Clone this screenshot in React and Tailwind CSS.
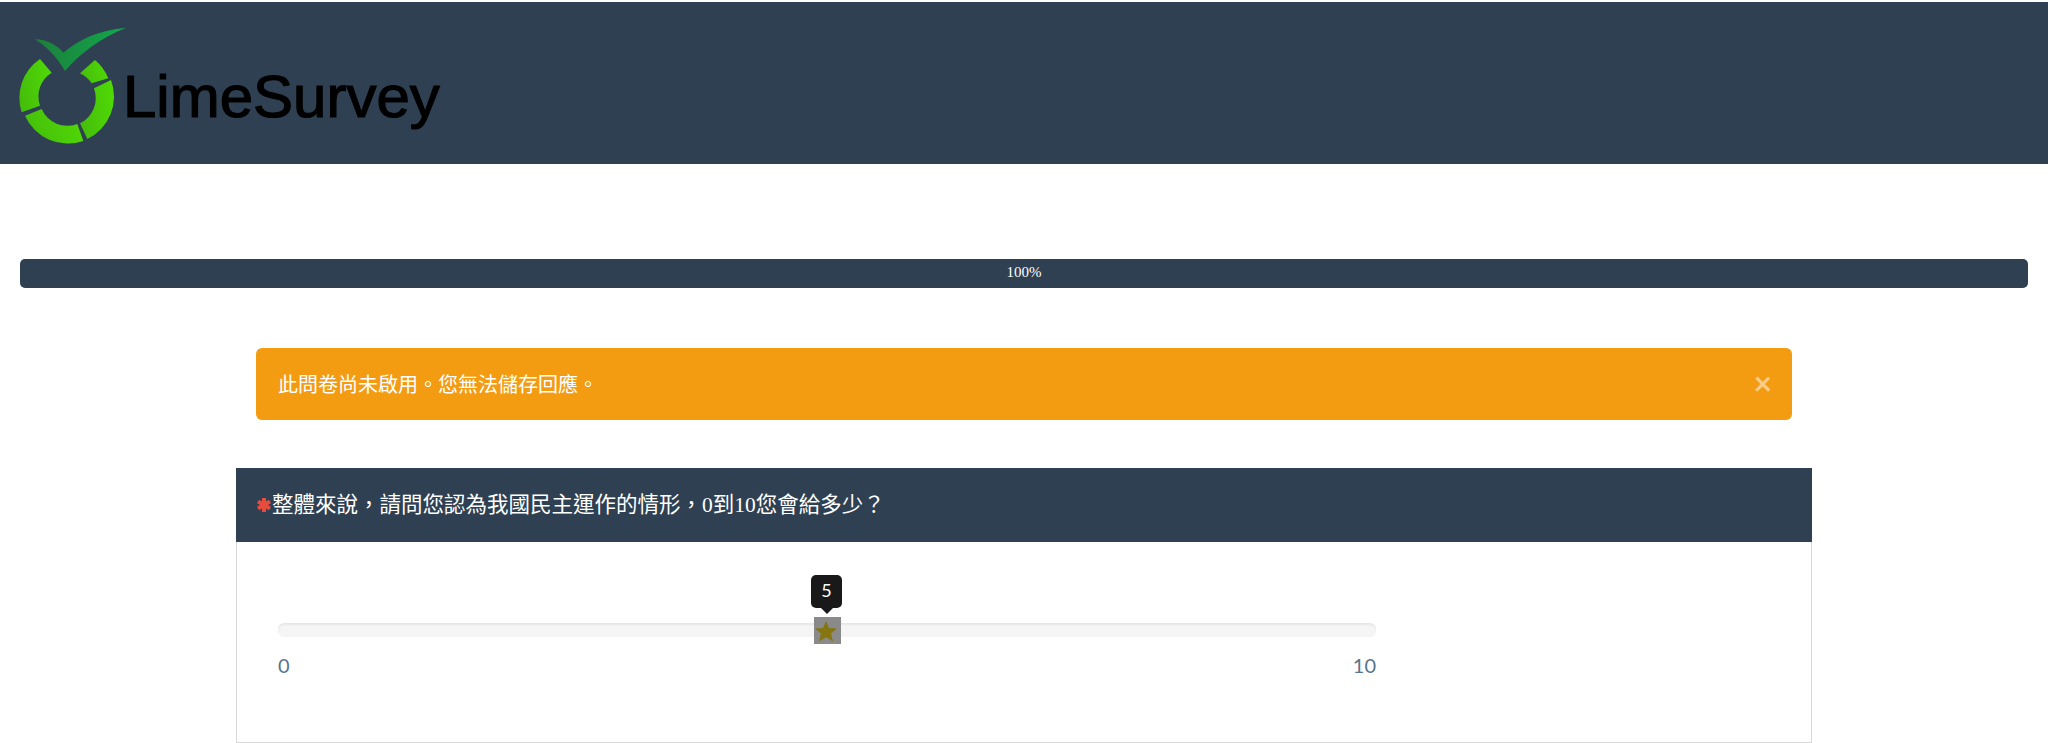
export default function App() {
  return (
    <div className="h-[743px] overflow-hidden bg-white font-['Liberation_Serif','Noto_Sans_CJK_TC',serif]">
      <header className="mt-[2px] flex h-[162px] items-start bg-[#2f4053]">
        <svg viewBox="0 0 420 450" width="140" height="150" className="mt-[8px] shrink-0">
          <defs>
            <linearGradient id="ring" x1="0" y1="0.7" x2="1" y2="0.4">
              <stop offset="0" stopColor="#45bd0b" />
              <stop offset="1" stopColor="#50d806" />
            </linearGradient>
            <linearGradient id="check" x1="0" y1="0" x2="1" y2="0">
              <stop offset="0" stopColor="#1c7f3a" />
              <stop offset="1" stopColor="#12a84c" />
            </linearGradient>
          </defs>
          <path fill="url(#ring)" d="M120 147 A141 141 0 0 0 65 307 L120 287 A84 84 0 0 1 155 188 Z" />
          <path fill="url(#ring)" d="M75 317 A141 141 0 0 0 250 393 L232 342 A84 84 0 0 1 125 297 Z" />
          <path fill="url(#ring)" d="M262 387 A141 141 0 0 0 333 210 L282 235 A84 84 0 0 1 240 340 Z" />
          <path fill="url(#ring)" d="M285 150 A141 141 0 0 1 325 205 L275 220 A84 84 0 0 0 240 190 Z" />
          <path fill="url(#check)" d="M105 88 C140 88 170 105 190 128 C240 85 300 60 378 53 C300 85 240 130 195 183 C170 140 140 110 105 88 Z" />
        </svg>
        <span className="ml-[-17px] mt-[60px] font-['Liberation_Sans',sans-serif] text-[60px] leading-[70px] text-black [-webkit-text-stroke:1.2px_black]">LimeSurvey</span>
      </header>

      <div className="mx-[20px] mt-[95px] flex h-[29px] items-center justify-center rounded-[5px] bg-[#2f4053] pb-[2px] text-[15px] text-white">
        100%
      </div>

      <div className="mx-[256px] mt-[60px] flex h-[72px] items-center justify-between rounded-[6px] bg-[#f39c12] pl-[22px] pr-[20px] text-[20px] text-white">
        <span className="pt-[2px]">此問卷尚未啟用。您無法儲存回應。</span>
        <span className="pb-[2px] font-['Lato',sans-serif] text-[32px] font-bold leading-none text-white/50">×</span>
      </div>

      <section className="mx-[236px] mt-[48px]">
        <div className="flex h-[74px] items-center bg-[#2f4053] pl-[20px] text-[21.5px] text-white">
          <svg viewBox="0 0 16 16" width="16" height="16" className="shrink-0 text-[#e74c3c]">
            <g stroke="currentColor" strokeWidth="4">
              <line x1="8" y1="1" x2="8" y2="15" />
              <line x1="2" y1="4.5" x2="14" y2="11.5" />
              <line x1="14" y1="4.5" x2="2" y2="11.5" />
            </g>
          </svg>
          <span>整體來說，請問您認為我國民主運作的情形，0到10您會給多少？</span>
        </div>
        <div className="h-[201px] border border-t-0 border-[#d8d8d8] pl-[41px] pt-[81px]">
          <div className="relative h-[14px] w-[1098px] rounded-[6px] bg-[#f5f5f5] shadow-[inset_0_2px_2px_rgba(0,0,0,0.06)]">
            <div className="absolute left-[536px] top-[-6px] flex h-[27px] w-[27px] items-center justify-center bg-[#8a8a8a] pr-[4px]">
              <svg viewBox="0 0 24 24" width="24" height="24" className="shrink-0">
                <path fill="#85760f" d="M12 2 L15 9 L23 9.6 L17 14.6 L19 22.4 L12 18.2 L5 22.4 L7 14.6 L1 9.6 L9 9 Z" />
              </svg>
            </div>
            <div className="absolute left-[533px] top-[-48px] flex h-[33px] w-[31px] items-center justify-center rounded-[5px] bg-[#191919] pb-[2px] font-['Lato',sans-serif] text-[18px] text-white">
              5
              <span className="absolute bottom-[-6px] left-1/2 ml-[-6px] h-0 w-0 border-x-[6px] border-t-[6px] border-x-transparent border-t-[#191919]" />
            </div>
          </div>
          <div className="mt-[14px] flex w-[1098px] justify-between font-['Lato',sans-serif] text-[20px] leading-[28px] text-[#587590]">
            <span>0</span>
            <span>10</span>
          </div>
        </div>
      </section>
    </div>
  );
}
